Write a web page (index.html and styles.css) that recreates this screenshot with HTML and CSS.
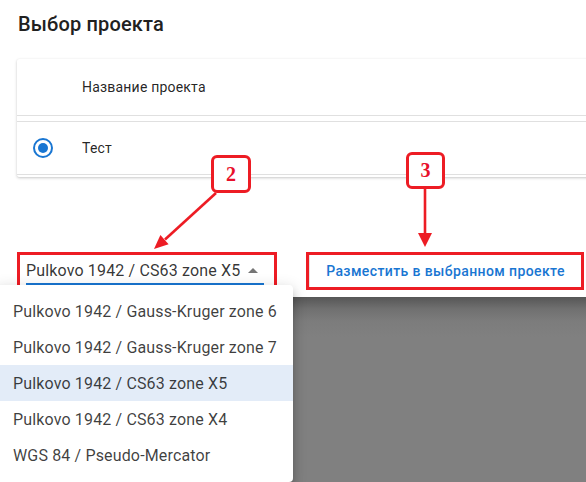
FILE: index.html
```html
<!DOCTYPE html>
<html lang="ru">
<head>
<meta charset="utf-8">
<title>Выбор проекта</title>
<link rel="stylesheet" href="styles.css">
</head>
<body>
<div class="page">
  <h1 class="title">Выбор проекта</h1>

  <div class="card">
    <div class="thead">
      <div class="cell-radio"></div>
      <div class="cell-name">Название проекта</div>
    </div>
    <div class="spacer"></div>
    <div class="trow">
      <div class="cell-radio"><span class="radio"><span class="radio-dot"></span></span></div>
      <div class="cell-name">Тест</div>
    </div>
  </div>

  <div class="toolbar">
    <div class="mark select-mark">
      <div class="select">
        <span class="select-value">Pulkovo 1942 / CS63 zone X5</span>
        <span class="caret"></span>
      </div>
    </div>
    <div class="mark button-mark">
      <button class="btn">Разместить в выбранном проекте</button>
    </div>
  </div>

  <div class="backdrop"></div>

  <ul class="menu">
    <li class="menu-item">Pulkovo 1942 / Gauss-Kruger zone 6</li>
    <li class="menu-item">Pulkovo 1942 / Gauss-Kruger zone 7</li>
    <li class="menu-item selected">Pulkovo 1942 / CS63 zone X5</li>
    <li class="menu-item">Pulkovo 1942 / CS63 zone X4</li>
    <li class="menu-item">WGS 84 / Pseudo-Mercator</li>
  </ul>

  <svg class="arrows" width="586" height="482" viewBox="0 0 586 482">
    <line x1="216" y1="193" x2="165" y2="239.5" stroke="#ed1c24" stroke-width="2.6"/>
    <polygon points="154,249 168.6,244.3 160.4,235.1" fill="#ed1c24"/>
    <line x1="425" y1="189" x2="425" y2="236" stroke="#ed1c24" stroke-width="2.6"/>
    <polygon points="418,233 432,233 425,247" fill="#ed1c24"/>
  </svg>

  <div class="callout callout-2">2</div>
  <div class="callout callout-3">3</div>
</div>
</body>
</html>
```

FILE: styles.css
```css
* { box-sizing: border-box; }

html, body {
  margin: 0;
  padding: 0;
  width: 586px;
  height: 482px;
  overflow: hidden;
  background: #ffffff;
  font-family: Roboto, "Noto Sans", Arial, sans-serif;
}

.page {
  position: relative;
  width: 586px;
  height: 482px;
  overflow: hidden;
  display: flex;
  flex-direction: column;
}

.title {
  margin: 12px 0 0 18px;
  font-size: 20px;
  line-height: 24px;
  font-weight: 500;
  letter-spacing: 0.15px;
  color: #212121;
}

.card {
  margin: 23px -30px 0 17px;
  background: #fff;
  box-shadow: 0 1px 3px rgba(0,0,0,0.22), 0 0 1px rgba(0,0,0,0.06);
  border-radius: 2px;
  padding-bottom: 2px;
}

.thead {
  display: flex;
  align-items: center;
  height: 57px;
  border-bottom: 1px solid #e0e0e0;
}

.spacer {
  height: 6px;
  border-bottom: 1px solid #e0e0e0;
}

.trow {
  display: flex;
  align-items: center;
  height: 53px;
  border-bottom: 1px solid #e0e0e0;
}

.cell-radio {
  width: 65px;
  flex: none;
  padding-left: 16px;
  display: flex;
  align-items: center;
}

.cell-name {
  font-size: 14px;
  line-height: 20px;
  letter-spacing: 0.2px;
  color: rgba(0,0,0,0.87);
}

.radio {
  width: 20px;
  height: 20px;
  border: 2px solid #1976d2;
  border-radius: 50%;
  display: flex;
  align-items: center;
  justify-content: center;
}

.radio-dot {
  width: 10px;
  height: 10px;
  border-radius: 50%;
  background: #1976d2;
}

.toolbar {
  display: flex;
  gap: 29px;
  margin: 75px 0 0 17px;
}

.mark {
  border: 3px solid #ed1c24;
  height: 38px;
}

.select-mark {
  width: 260px;
  padding: 0 10px 0 6px;
}

.select {
  display: flex;
  align-items: center;
  justify-content: space-between;
  border-bottom: 2px solid #1976d2;
  margin-bottom: 4px;
  height: 30px;
  padding-top: 3px;
}

.select-value {
  font-size: 16px;
  line-height: 20px;
  letter-spacing: 0.15px;
  color: rgba(0,0,0,0.8);
}

.caret {
  width: 0;
  height: 0;
  border-left: 5px solid transparent;
  border-right: 5px solid transparent;
  border-bottom: 5px solid #757575;
  margin-right: 6px;
}

.button-mark {
  width: 278px;
  padding: 0;
  display: flex;
}

.btn {
  flex: 1;
  margin: 0;
  border: none;
  border-left: 1px solid #e4e4e4;
  background: #fff;
  color: #1976d2;
  font-family: Roboto, "Noto Sans", Arial, sans-serif;
  font-size: 14px;
  font-weight: 500;
  letter-spacing: 0.4px;
  line-height: 20px;
  padding: 0;
  cursor: pointer;
}

.backdrop {
  flex: 1;
  margin-top: 7px;
  background: linear-gradient(#565656 0px, #707070 12px, #7c7c7c 24px, #808080 40px);
}

.menu {
  position: absolute;
  left: -4px;
  top: 285px;
  width: 297px;
  height: 197px;
  margin: 0;
  padding: 8px 0;
  list-style: none;
  background: #fff;
  border-radius: 4px;
  box-shadow: 0 5px 5px -3px rgba(0,0,0,0.2), 0 8px 10px 1px rgba(0,0,0,0.14), 0 3px 14px 2px rgba(0,0,0,0.12);
}

.menu-item {
  height: 36px;
  display: flex;
  align-items: center;
  padding-left: 17px;
  font-size: 16px;
  letter-spacing: 0.15px;
  color: rgba(0,0,0,0.76);
  white-space: nowrap;
}

.menu-item.selected {
  background: #e3ecf8;
}

.arrows {
  position: absolute;
  left: 0;
  top: 0;
  pointer-events: none;
}

.callout {
  position: absolute;
  border: 3px solid #ed1c24;
  border-radius: 6px;
  background: #fff;
  color: #e8102a;
  font-family: "Liberation Serif", "DejaVu Serif", serif;
  font-weight: 700;
  font-size: 20px;
  display: flex;
  align-items: center;
  justify-content: center;
}

.callout-2 {
  left: 211px;
  top: 155px;
  width: 40px;
  height: 38px;
}

.callout-3 {
  left: 406px;
  top: 152px;
  width: 39px;
  height: 37px;
}
```
